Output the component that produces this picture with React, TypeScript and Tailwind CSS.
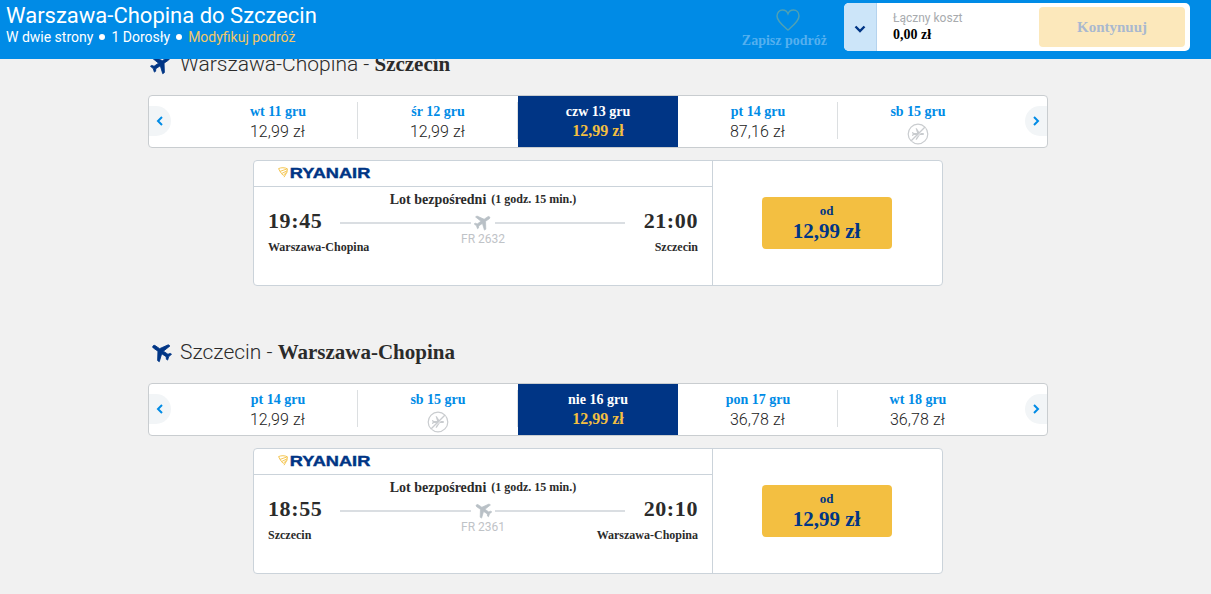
import React from "react";

interface Fare {
  date: string;
  price?: string;
  selected?: boolean;
}

interface Flight {
  from: string;
  to: string;
  departure: string;
  arrival: string;
  number: string;
  inbound?: boolean;
  fares: Fare[];
}

const flights: Flight[] = [
  {
    from: "Warszawa-Chopina",
    to: "Szczecin",
    departure: "19:45",
    arrival: "21:00",
    number: "FR 2632",
    fares: [
      { date: "wt 11 gru", price: "12,99 zł" },
      { date: "śr 12 gru", price: "12,99 zł" },
      { date: "czw 13 gru", price: "12,99 zł", selected: true },
      { date: "pt 14 gru", price: "87,16 zł" },
      { date: "sb 15 gru" },
    ],
  },
  {
    from: "Szczecin",
    to: "Warszawa-Chopina",
    departure: "18:55",
    arrival: "20:10",
    number: "FR 2361",
    inbound: true,
    fares: [
      { date: "pt 14 gru", price: "12,99 zł" },
      { date: "sb 15 gru" },
      { date: "nie 16 gru", price: "12,99 zł", selected: true },
      { date: "pon 17 gru", price: "36,78 zł" },
      { date: "wt 18 gru", price: "36,78 zł" },
    ],
  },
];

const PLANE =
  "M21 16v-2l-8-5V3.5c0-.83-.67-1.5-1.5-1.5S10 2.67 10 3.5V9l-8 5v2l8-2.5V19l-2 1.5V22l3.5-1 3.5 1v-1.5L13 19v-5.5l8 2.5z";

const Plane = ({ inbound, className }: { inbound?: boolean; className: string }) => (
  <svg viewBox="0 0 24 24" fill="currentColor" className={className}>
    <g transform={inbound ? "matrix(-1 0 0 1 24 0)" : undefined}>
      <path
        d={PLANE}
        stroke="currentColor"
        strokeWidth="0.8"
        transform="rotate(56 12 12)"
      />
    </g>
  </svg>
);

const NoFlight = () => (
  <svg viewBox="0 0 22 22" fill="none" className="size-[22px] text-[#c9cccf]">
    <circle cx="11" cy="11" r="9.8" stroke="currentColor" strokeWidth="1.2" />
    <path
      d={PLANE}
      fill="currentColor"
      transform="translate(11 11) rotate(90) scale(.6) translate(-11.5 -12)"
    />
    <path d="M4.9 18.5L18.5 4.9" stroke="#fff" strokeWidth="1" />
    <path d="M4.2 17.8L17.8 4.2" stroke="currentColor" strokeWidth="1.3" />
  </svg>
);

const Logo = () => (
  <svg width="94" height="14" viewBox="0 0 94 14">
    <g fill="none" stroke="#f3bf41" strokeWidth="0.9">
      <path d="M.6 2.600C3 1.400 7 1.400 9.400 2.800L9 6.200 6 11.200" />
      <path d="M.6 2.600L2 5.400l6.800-2.400M2 5.400l1.600 2.200L9 4.800M3.600 7.600l1.600 1.800L8.600 6.200" />
    </g>
    <text
      x="11.8"
      y="12"
      fill="#003585"
      stroke="#003585"
      strokeWidth="0.4"
      fontFamily="Liberation Sans, sans-serif"
      fontWeight="700"
      fontSize="14"
      textLength="80.5"
      lengthAdjust="spacingAndGlyphs"
    >
      RYANAIR
    </text>
  </svg>
);

const Arrow = ({ next }: { next?: boolean }) => (
  <button
    className={
      next
        ? "mb-0.5 ml-auto flex h-[30px] w-[22px] items-center justify-center rounded-l-full bg-[#f2f5f7]"
        : "mr-[27px] mb-0.5 flex h-[30px] w-[22px] items-center justify-center rounded-r-full bg-[#f2f5f7]"
    }
  >
    <svg width="8" height="10" viewBox="0 0 8 10" fill="none" stroke="#008be6" strokeWidth="2">
      <path d={next ? "M2 1l4 4-4 4" : "M6 1L2 5l4 4"} />
    </svg>
  </button>
);

const FareItem = ({ fare, divider }: { fare: Fare; divider: boolean }) => (
  <div
    className={
      fare.selected
        ? "flex h-full w-40 bg-[#003585] text-white"
        : "flex h-full w-40 text-[#008be6]"
    }
  >
    <div className="flex flex-1 flex-col items-center pt-[6px]">
      <span className="font-['Liberation_Serif',serif] text-[14px] leading-5 font-bold">
        {fare.date}
      </span>
      {!fare.price ? (
        <div className="pt-px">
          <NoFlight />
        </div>
      ) : fare.selected ? (
        <span className="font-['Liberation_Serif',serif] text-[16px] leading-[18px] font-bold text-[#f3bf41]">
          {fare.price}
        </span>
      ) : (
        <span className="pr-px text-[16px] leading-5 font-light tracking-[0.1px] text-[#222]">
          {fare.price}
        </span>
      )}
    </div>
    {divider && <div className="mt-[6px] -ml-px h-[37px] w-px bg-[#dcdfe1]" />}
  </div>
);

const FlightCard = ({ flight }: { flight: Flight }) => (
  <div className="mt-3 ml-[105px] flex h-[126px] w-[690px] rounded border border-[#cbd3da] bg-white">
    <div className="flex w-[459px] flex-col border-r border-[#cbd3da]">
      <div className="h-[26px] border-b border-[#cbd3da] pt-[5px] pl-6">
        <Logo />
      </div>
      <div className="flex flex-col px-[14px] pt-[5px] font-['Liberation_Serif',serif] font-bold text-[#2b2b2b]">
        <div className="flex items-baseline justify-center gap-[5px] leading-4">
          <span className="text-[14px]">Lot bezpośredni</span>
          <span className="relative -top-px text-[12px]">(1 godz. 15 min.)</span>
        </div>
        <div className="flex h-7 items-center justify-between">
          <span className="-mt-1 w-[72px] text-[22px] tracking-[0.6px]">{flight.departure}</span>
          <div className="mt-px flex flex-1 items-center gap-[2px] text-[#b9c0c6]">
            <div className="h-0.5 flex-1 bg-[#dadee2]" />
            <Plane inbound={flight.inbound} className="-mt-0.5 size-5" />
            <div className="h-0.5 flex-1 bg-[#dadee2]" />
          </div>
          <span className="-mt-1 w-[73px] text-right text-[22px] tracking-[0.6px]">
            {flight.arrival}
          </span>
        </div>
        <div className="flex h-[19px] items-end justify-between text-[12px] leading-4">
          <span className="w-[140px]">{flight.from}</span>
          <span className="-mt-[5px] self-start font-[Roboto,sans-serif] leading-4 font-normal text-[#bfc3c7]">
            {flight.number}
          </span>
          <span className="w-[140px] text-right">{flight.to}</span>
        </div>
      </div>
    </div>
    <div className="flex flex-1 items-center justify-center pr-[2px]">
      <button className="flex h-[52px] w-[130px] flex-col items-center rounded bg-[#f3bf41] pt-[5px] font-['Liberation_Serif',serif] font-bold text-[#003585]">
        <span className="text-[13px] leading-[18px]">od</span>
        <span className="text-[21px] leading-[22px]">12,99 zł</span>
      </button>
    </div>
  </div>
);

const FlightSection = ({ flight }: { flight: Flight }) => (
  <section className="h-[288px]">
    <h2 className="flex h-7 items-center text-[21px] text-[#2b2b2b]">
      <Plane inbound={flight.inbound} className="mr-[7px] ml-px size-6 text-[#003585]" />
      <span className="pt-[2px] font-light whitespace-pre">{flight.from} - </span>
      <span className="pt-[2px] font-['Liberation_Serif',serif] font-bold">{flight.to}</span>
    </h2>
    <div className="mt-[17px] flex h-[53px] items-center rounded border border-[#c9cdd0] bg-white">
      <Arrow />
      {flight.fares.map((fare, i) => (
        <FareItem key={fare.date} fare={fare} divider={i !== 2 && i !== 4} />
      ))}
      <Arrow next />
    </div>
    <FlightCard flight={flight} />
  </section>
);

const Header = () => (
  <header className="z-10 flex h-[59px] shrink-0 justify-between bg-[#008be6] pr-[21px] pl-[6px] text-white">
    <div>
      <h1 className="pt-[3px] text-[22px] leading-[25px]">Warszawa-Chopina do Szczecin</h1>
      <div className="flex items-center text-[14px] leading-[18px]">
        <span>W dwie strony</span>
        <span className="mx-[6px] size-[6px] rounded-full bg-white" />
        <span>1 Dorosły</span>
        <span className="mx-[6px] size-[6px] rounded-full bg-white" />
        <a className="text-[#f3c766]">Modyfikuj podróż</a>
      </div>
    </div>
    <div className="flex">
      <div className="mr-[17px] flex flex-col items-center pt-2 font-['Liberation_Serif',serif] text-[14px] leading-4 font-bold text-[#55b0ef]">
        <svg width="26" height="24" viewBox="0 0 26 24" fill="none" stroke="#4fa1b4" strokeWidth="1.5" className="mb-px ml-[7px]">
          <path d="M13 22C9 18.5 2 13.5 2 8c0-3.6 2.4-6 5.6-6C10 2 12 3.300 13 5.800 14 3.300 16 2 18.400 2 21.600 2 24 4.400 24 8c0 5.500-7 10.500-11 14z" />
        </svg>
        <span>Zapisz podróż</span>
      </div>
      <div className="mt-[3px] flex h-12 w-[346px] overflow-hidden rounded-[5px] bg-white">
        <div className="flex w-[33px] items-center justify-center border-r border-[#b5d3ee] bg-[#cce5f9]">
          <svg width="12" height="8" viewBox="0 0 12 8" fill="none" stroke="#003585" strokeWidth="2.4" className="mt-1">
            <path d="M1.500 1.500L6 6l4.500-4.500" />
          </svg>
        </div>
        <div className="flex-1 pt-[7px] pl-4">
          <div className="text-[12px] leading-4 text-[#a8abae]">Łączny koszt</div>
          <div className="font-['Liberation_Serif',serif] text-[14px] leading-[17px] font-bold text-black">
            0,00 zł
          </div>
        </div>
        <button className="mt-1 mr-[5px] h-10 w-[146px] rounded bg-[#fce8bb] font-['Liberation_Serif',serif] text-[15px] font-bold text-[#a9b8cf]">
          Kontynuuj
        </button>
      </div>
    </div>
  </header>
);

export default function App() {
  return (
    <div className="flex h-screen flex-col overflow-hidden bg-[#f1f1f1] font-[Roboto,sans-serif]">
      <Header />
      <main className="min-h-0 flex-1 overflow-hidden">
        <div className="-mt-[9px] ml-[148px] w-[900px]">
          {flights.map((flight) => (
            <FlightSection key={flight.number} flight={flight} />
          ))}
        </div>
      </main>
    </div>
  );
}
